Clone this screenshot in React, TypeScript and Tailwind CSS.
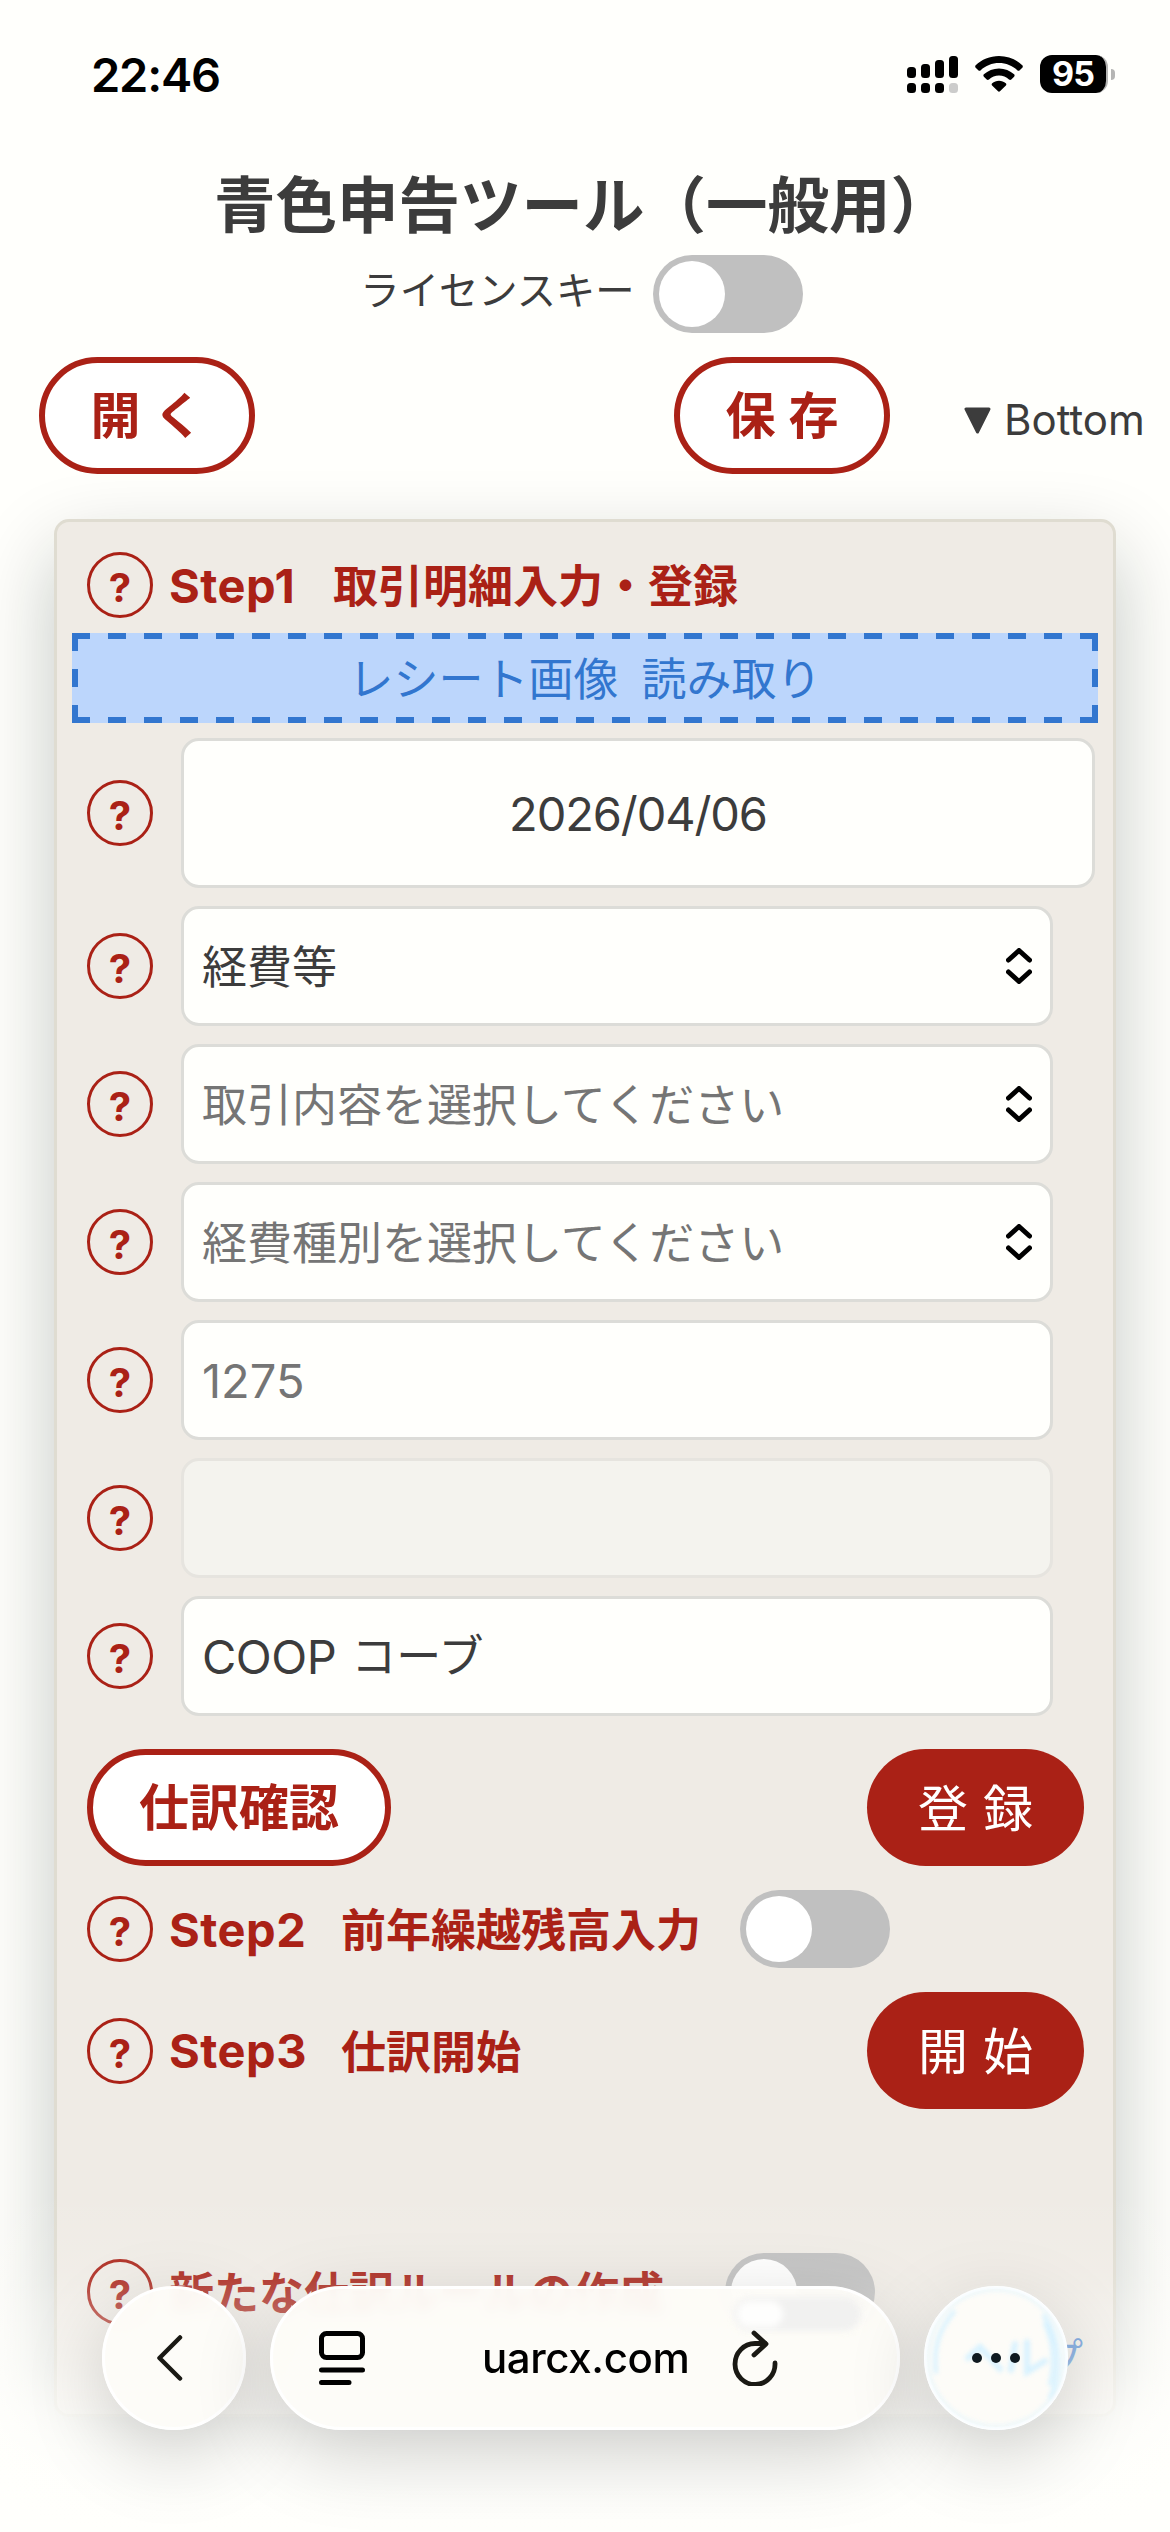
import React from 'react';

const HelpIcon: React.FC = () => (
  <span className="flex h-[66px] w-[66px] shrink-0 items-center justify-center rounded-full border-[3px] border-[#aa2116] pt-[6px] text-[40px] leading-none font-bold text-[#aa2116]">
    ?
  </span>
);

const Toggle: React.FC<{ className?: string }> = ({ className = '' }) => (
  <span className={`flex h-[78px] w-[150px] shrink-0 items-center rounded-full bg-[#c0c0c0] p-1.5 ${className}`}>
    <span className="h-[66px] w-[66px] rounded-full bg-white"></span>
  </span>
);

const OutlineButton: React.FC<{ children: React.ReactNode; className: string }> = ({ children, className }) => (
  <button
    className={`flex h-[117px] shrink-0 items-center justify-center gap-[13px] rounded-full border-[6px] border-[#aa2116] bg-white text-[50px] leading-none font-bold text-[#aa2116] ${className}`}
  >
    {children}
  </button>
);

const SolidButton: React.FC<{ children: React.ReactNode }> = ({ children }) => (
  <button className="flex h-[117px] w-[217px] shrink-0 items-center justify-center gap-[15px] rounded-full bg-[#aa2116] pt-0.5 text-[50px] leading-none text-white">
    {children}
  </button>
);

const StepTitle: React.FC<{ step: string; title: string; stepWidth?: string }> = ({ step, title, stepWidth = 'w-[172px]' }) => (
  <h2 className="ml-4 flex items-center leading-none font-bold whitespace-nowrap text-[#aa2116]">
    <span className={`text-[47px] tracking-[0.5px] ${stepWidth}`}>{step}</span>
    <span className="pt-[3px] text-[45px]">{title}</span>
  </h2>
);

const UpDown: React.FC = () => (
  <svg className="h-[36px] w-[26px]" viewBox="0 0 26 36" fill="none" stroke="#000" strokeWidth="5" strokeLinecap="round" strokeLinejoin="round">
    <path d="M2.5 12 L13 2.5 L23.5 12" />
    <path d="M2.5 24 L13 33.5 L23.5 24" />
  </svg>
);

const SelectRow: React.FC<{ label: string; muted?: boolean }> = ({ label, muted }) => (
  <div className="flex items-center gap-7">
    <HelpIcon />
    <div className="flex h-[120px] w-[872px] items-center justify-between rounded-[18px] border-[3px] border-[#dcdcd8] bg-[#fffffc] pr-[18px] pl-[18px]">
      <span className={`pt-[3px] text-[45px] leading-none ${muted ? 'text-[#757575]' : 'text-[#3c3c3c]'}`}>{label}</span>
      <UpDown />
    </div>
  </div>
);

const StatusBar: React.FC = () => (
  <div className="flex h-[150px] items-center justify-between pr-[55px] pl-[91px]">
    <span className="pb-0.5 text-[47px] leading-none font-semibold tracking-[-1.200px] text-black">22:46</span>
    <div className="flex items-center pb-0.5">
      <svg className="h-[38px] w-[52px]" viewBox="0 0 52 38">
        <rect x="0" y="12" width="9" height="11" rx="3.5" />
        <rect x="14" y="9" width="9" height="14" rx="3.5" />
        <rect x="28" y="5" width="9" height="18" rx="3.5" />
        <rect x="42" y="1" width="9" height="22" rx="3.5" />
        <rect x="0" y="28" width="9" height="10" rx="3.5" />
        <rect x="14" y="28" width="9" height="10" rx="3.5" />
        <rect x="28" y="28" width="9" height="10" rx="3.5" />
        <rect x="42" y="28" width="9" height="10" rx="3.5" fill="#cccccb" />
      </svg>
      <svg className="ml-4 h-[36px] w-[48px]" viewBox="0 0 48 36">
        <path d="M24 0 C33 0 41.500 3.500 47.300 9.300 C48 10 48 11 47.300 11.700 L44.700 14.300 C44 15 43 15 42.300 14.300 C37.500 9.700 31 7.100 24 7.100 C17 7.100 10.500 9.700 5.700 14.300 C5 15 4 15 3.300 14.300 L0.700 11.700 C0 11 0 10 0.700 9.300 C6.500 3.500 15 0 24 0 Z" />
        <path d="M24 12.400 C29.800 12.400 35.100 14.600 39.100 18.300 C39.800 19 39.800 20 39.100 20.700 L36.300 23.400 C35.600 24.100 34.700 24 34 23.400 C31.300 21 27.800 19.600 24 19.600 C20.200 19.600 16.700 21 14 23.400 C13.300 24 12.400 24.100 11.700 23.400 L8.900 20.700 C8.200 20 8.200 19 8.900 18.300 C12.900 14.600 18.200 12.400 24 12.400 Z" />
        <path d="M24 24.700 C26.600 24.700 29 25.700 30.800 27.200 C31.500 27.900 31.500 28.700 30.900 29.400 L25.200 35.100 C24.500 35.800 23.500 35.800 22.800 35.100 L17.100 29.400 C16.500 28.700 16.500 27.900 17.200 27.200 C19 25.700 21.400 24.700 24 24.700 Z" />
      </svg>
      <div className="ml-[17px] flex h-[38px] w-[68px] items-center justify-center rounded-[12px] border-r-2 border-[#b5b5b4] bg-black text-[34px] leading-none font-bold tracking-[-1px] text-white">
        95
      </div>
      <div className="ml-[3px] h-[11px] w-1 rounded-r-full bg-[#b5b5b4]"></div>
    </div>
  </div>
);

const BrowserBar: React.FC = () => (
  <div className="absolute inset-x-0 top-[2286px] flex justify-center gap-6">
    <div className="flex h-[144px] w-[144px] items-center justify-center rounded-full border-[3px] border-white bg-[#fdfcf8]/96 shadow-[0_24px_80px_rgba(0,0,0,0.18)] backdrop-blur-[6px]">
      <svg className="mr-2 h-[46px] w-[28px]" viewBox="0 0 28 46" fill="none" stroke="#1a1914" strokeWidth="4.500" strokeLinecap="round" strokeLinejoin="round">
        <path d="M24 2.500 L3.500 23 L24 43.500" />
      </svg>
    </div>
    <div className="relative flex h-[144px] w-[630px] items-center rounded-full border-[3px] border-white bg-[#fdfcf8]/95 pl-[46px] shadow-[0_24px_80px_rgba(0,0,0,0.18)] backdrop-blur-[6px]">
      {/* switch below the bar, bent by the glass */}
      <div className="absolute top-2 left-[460px] h-[34px] w-[128px] rounded-full bg-[#f1f1f0] p-1 blur-[3px]">
        <div className="h-[26px] w-[46px] rounded-full bg-[#fefefd]"></div>
      </div>
      <svg className="h-[54px] w-[46px]" viewBox="0 0 46 54" fill="none" stroke="#000" strokeWidth="5" strokeLinecap="round">
        <rect x="2.500" y="2.500" width="41" height="24" rx="5" />
        <path d="M2.500 39 H43.500 M2.500 51.500 H30" />
      </svg>
      <span className="ml-[117px] w-[206px] text-[42px] leading-none font-medium tracking-[-0.400px] whitespace-nowrap text-black">uarcx.com</span>
      <svg className="relative ml-[44px] h-[56px] w-[46px]" viewBox="0 0 46 56" fill="none" stroke="#1a1914" strokeWidth="4.800" strokeLinecap="round" strokeLinejoin="round">
        <path d="M43 33 A20 20.500 0 1 1 23 13.500 H33" />
        <path d="M22 3 L34 14 L22 25" />
      </svg>
    </div>
    <div className="relative flex h-[144px] w-[144px] items-center justify-center gap-[9px] rounded-full border-[3px] border-white bg-[#fdfcf8]/97 shadow-[0_24px_80px_rgba(0,0,0,0.18)] backdrop-blur-[5px]">
      <svg className="absolute -top-[3px] -left-[3px] h-[144px] w-[144px] blur-[2px]" viewBox="0 0 144 144" fill="none" stroke="#d8f2ff" strokeLinecap="round">
        <circle cx="72" cy="72" r="68" strokeWidth="1.500" />
        <path d="M12 86 C9 60 16 42 30 26" strokeWidth="4" />
        <path d="M120 30 C138 56 137 88 126 112" strokeWidth="4" />
        <path d="M121 38 C130 55 131 80 126 98" strokeWidth="4" />
        <path d="M44 72 L56 61 L76 83" strokeWidth="6" />
        <path d="M91 58 L87 84 M103 56 V86 L121 75" strokeWidth="6" />
      </svg>
      <span className="relative h-2.5 w-2.5 rounded-full bg-[#0f1a20]"></span>
      <span className="relative h-2.5 w-2.5 rounded-full bg-[#0f1a20]"></span>
      <span className="relative h-2.5 w-2.5 rounded-full bg-[#0f1a20]"></span>
    </div>
  </div>
);

const App: React.FC = () => {
  return (
    <div className="relative h-[2532px] w-[1170px] overflow-hidden bg-[#fffffc] font-['Inter','Noto_Sans_CJK_JP',sans-serif] text-[#3c3c3c]">
      <StatusBar />

      <header>
        <h1 className="mt-[25px] -ml-1 text-center text-[61.5px] leading-[62px] font-bold">青色申告ツール（一般用）</h1>
        <div className="mt-[18px] flex h-[78px] items-center justify-center pr-[7px]">
          <span className="mr-[18px] pb-1.5 text-[39.300px] leading-none">ライセンスキー</span>
          <Toggle />
        </div>
        <div className="mt-6 flex h-[117px] items-center pl-[39px]">
          <OutlineButton className="w-[216px]">
            <span>開</span>
            <span>く</span>
          </OutlineButton>
          <OutlineButton className="ml-[419px] w-[216px]">
            <span>保</span>
            <span>存</span>
          </OutlineButton>
          <a href="#bottom" className="ml-[74px] flex items-center pt-[9px] text-[42px] leading-none whitespace-nowrap">
            <svg className="mr-[13px] h-[27px] w-[27px]" viewBox="0 0 27 27" fill="#3c3c3c" stroke="#3c3c3c" strokeWidth="3" strokeLinejoin="round">
              <path d="M2 2 H25 L13.500 25 Z" />
            </svg>
            Bottom
          </a>
        </div>
      </header>

      <main className="mt-[45px] ml-[54px] h-[1898px] w-[1062px] rounded-[15px] border-[3px] border-[#dfdcd1] bg-[#efebe5] pt-[30px] shadow-[0_32px_80px_rgba(10,25,20,0.24)]">
        <div className="flex h-[66px] items-center pl-[30px]">
          <HelpIcon />
          <StepTitle step="Step1" title="取引明細入力・登録" stepWidth="w-[164px]" />
        </div>

        <div className="mt-[15px] ml-[15px] flex h-[90px] w-[1026px] items-center justify-center gap-[23px] bg-[#bcd6fc] bg-[linear-gradient(90deg,#3276cf_50%,transparent_50%),linear-gradient(90deg,#3276cf_50%,transparent_50%),linear-gradient(#3276cf_50%,transparent_50%),linear-gradient(#3276cf_50%,transparent_50%)] [background-position:0_0,0_100%,0_0,100%_0] [background-repeat:repeat-x,repeat-x,repeat-y,repeat-y] [background-size:36px_6px,36px_6px,6px_36px,6px_36px] pt-[3px] text-[45px] leading-none text-[#3276cf]">
          <span>レシート画像</span>
          <span>読み取り</span>
        </div>

        <div className="mt-[15px] flex flex-col gap-[18px] pl-[30px]">
          <div className="flex items-center gap-7">
            <HelpIcon />
            <div className="flex h-[150px] w-[914px] items-center justify-center rounded-[18px] border-[3px] border-[#dcdcd8] bg-[#fffffc] text-[47px] leading-none tracking-[-1.100px]">
              2026/04/06
            </div>
          </div>
          <SelectRow label="経費等" />
          <SelectRow label="取引内容を選択してください" muted />
          <SelectRow label="経費種別を選択してください" muted />
          <div className="flex items-center gap-7">
            <HelpIcon />
            <div className="flex h-[120px] w-[872px] items-center rounded-[18px] border-[3px] border-[#dcdcd8] bg-[#fffffc] px-[18px] text-[47px] leading-none text-[#757575]">
              1275
            </div>
          </div>
          <div className="flex items-center gap-7">
            <HelpIcon />
            <div className="h-[120px] w-[872px] rounded-[18px] border-[3px] border-[#e6e4df] bg-[#f4f3ee]"></div>
          </div>
          <div className="flex items-center gap-7">
            <HelpIcon />
            <div className="flex h-[120px] w-[872px] items-center rounded-[18px] border-[3px] border-[#dcdcd8] bg-[#fffffc] px-[18px] leading-none">
              <span className="text-[47px] tracking-[-0.500px]">COOP</span>
              <span className="ml-[15px] text-[45px]">コーブ</span>
            </div>
          </div>
        </div>

        <div className="mt-[33px] flex justify-between pr-[29px] pl-[30px]">
          <OutlineButton className="w-[304px]">仕訳確認</OutlineButton>
          <SolidButton>
            <span>登</span>
            <span>録</span>
          </SolidButton>
        </div>

        <div className="mt-6 flex h-[78px] items-center pl-[30px]">
          <HelpIcon />
          <StepTitle step="Step2" title="前年繰越残高入力" />
          <Toggle className="ml-[39px]" />
        </div>

        <div className="mt-6 flex h-[117px] items-center pr-[29px] pl-[30px]">
          <HelpIcon />
          <StepTitle step="Step3" title="仕訳開始" />
          <div className="ml-auto">
            <SolidButton>
              <span>開</span>
              <span>始</span>
            </SolidButton>
          </div>
        </div>

        <div className="mt-[144px] flex h-[78px] items-center pl-[30px]">
          <HelpIcon />
          <h2 className="ml-4 pt-[3px] text-[45px] leading-none font-bold whitespace-nowrap text-[#aa2116]">新たな仕訳ルールの作成</h2>
          <Toggle className="ml-[61px]" />
        </div>
        <a href="#help" className="mt-1 mr-[30px] block text-right text-[40px] leading-[46px] text-[#3276cf]">ヘルプ</a>
      </main>

      {/* page fades out behind the floating browser bar */}
      <div className="absolute inset-x-0 bottom-0 h-[342px] bg-[linear-gradient(rgba(255,255,252,0),rgba(255,255,252,0.13)_25%,rgba(255,255,252,0.3)_35%,rgba(255,255,252,0.5)_50%,rgba(255,255,252,0.82)_66%,rgba(255,255,252,0.95)_78%)]"></div>
      <BrowserBar />
    </div>
  );
};

export default App;
